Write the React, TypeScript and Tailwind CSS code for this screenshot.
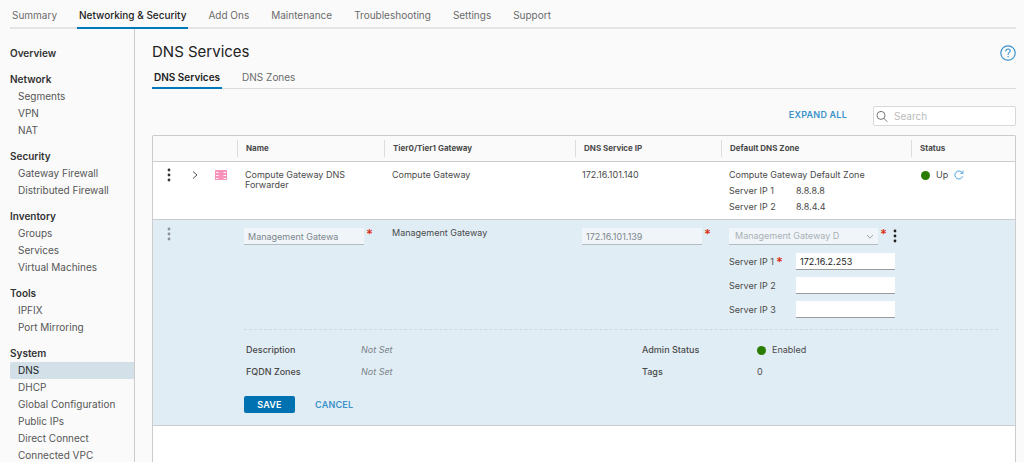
import { useState } from 'react';
import clsx from 'clsx';

const TABS = ['Summary', 'Networking & Security', 'Add Ons', 'Maintenance', 'Troubleshooting', 'Settings', 'Support'];

const SIDEBAR = [
  { title: 'Overview', items: [] },
  { title: 'Network', items: ['Segments', 'VPN', 'NAT'] },
  { title: 'Security', items: ['Gateway Firewall', 'Distributed Firewall'] },
  { title: 'Inventory', items: ['Groups', 'Services', 'Virtual Machines'] },
  { title: 'Tools', items: ['IPFIX', 'Port Mirroring'] },
  { title: 'System', items: ['DNS', 'DHCP', 'Global Configuration', 'Public IPs', 'Direct Connect', 'Connected VPC'] },
];

const COLUMNS = ['Name', 'Tier0/Tier1 Gateway', 'DNS Service IP', 'Default DNS Zone', 'Status'];

const disabledField = 'h-[17px] border-b border-[#b3bcc2] bg-[#f0f5f9] text-[9px] text-[#7d868c]';

function Dots({ className }: { className?: string }) {
  return (
    <svg viewBox="0 0 4 14" className={clsx('h-3.5 w-1', className)} fill="currentColor">
      <circle cx="2" cy="2" r="1.4" />
      <circle cx="2" cy="7" r="1.4" />
      <circle cx="2" cy="12" r="1.4" />
    </svg>
  );
}

function Required() {
  return <span className="text-[13px] leading-3 font-semibold text-[#d9331a]">*</span>;
}

function Dot() {
  return <span className="h-[9px] w-[9px] shrink-0 rounded-full bg-[#2b7d00]" />;
}

function ForwarderIcon() {
  return (
    <svg viewBox="0 0 12 10" className="h-2.5 w-3">
      <rect width="12" height="10" rx="0.6" fill="#f792bb" />
      <path d="M1 2.5h2.5M1 5.5h2.5M1 8.5h2.5M8.5 2.5H11M8.5 5.5H11M8.5 8.5H11" stroke="#fff" strokeWidth="0.9" />
    </svg>
  );
}

function ServerIp({ n, required, value }: { n: number; required?: boolean; value?: string }) {
  const id = `server-ip-${n}`;
  return (
    <div className="flex h-[17px] items-center">
      <label htmlFor={id} className="flex w-[67px] shrink-0 items-center gap-0.5">
        Server IP {n} {required && <Required />}
      </label>
      <input id={id} defaultValue={value}
        className="h-[17px] w-[99px] border-b border-[#9a9a9a] bg-white px-1 text-[9px] text-[#222] outline-none" />
    </div>
  );
}

export default function App() {
  const [tab, setTab] = useState('Networking & Security');
  const [page, setPage] = useState('DNS');
  const [view, setView] = useState('DNS Services');

  return (
    <div className="flex h-screen flex-col overflow-hidden bg-[#fafafa] pr-2 pl-2.5 font-['Inter',sans-serif] text-[9px] text-[#4a4a4a]">
      {/* Top tabs */}
      <nav className="flex h-[29px] shrink-0 gap-[18px] border-b-2 border-[#e4e4e4] text-[10px]">
        {TABS.map(t => (
          <button key={t} onClick={() => setTab(t)}
            className={clsx('-mb-0.5 h-[29px] border-b-2 px-0.5 pt-1 whitespace-nowrap',
              t === tab ? 'border-[#0079b8] font-medium text-[#222]' : 'border-transparent text-[#6b6b6b]')}>
            {t}
          </button>
        ))}
      </nav>

      <div className="flex min-h-0 flex-1">
        {/* Sidebar */}
        <aside className="flex w-[125px] shrink-0 flex-col gap-[9px] overflow-hidden border-r border-[#ccc] pt-4 text-[10px] leading-[17px]">
          {SIDEBAR.map(group => (
            <div key={group.title}>
              <h2 className="font-semibold text-[#333]">{group.title}</h2>
              {group.items.map(item => (
                <a key={item} href="#" onClick={() => setPage(item)}
                  className={clsx('block rounded-l-xs pl-2 whitespace-nowrap', item === page ? 'bg-[#d3e0e8] text-[#222]' : 'text-[#565656]')}>
                  {item}
                </a>
              ))}
            </div>
          ))}
        </aside>

        <main className="flex min-w-0 flex-1 flex-col pl-[17px]">
          <header className="mt-[11px] flex h-[25px] items-center justify-between">
            <h1 className="text-[15px] text-[#222]">DNS Services</h1>
            <button aria-label="Help" className="text-[#3a92c8]">
              <svg viewBox="0 0 16 16" className="h-4 w-4" fill="none" stroke="currentColor">
                <circle cx="8" cy="8" r="7.2" strokeWidth="1.2" />
                <path d="M5.9 6.1c0-1.3.9-2.1 2.2-2.1s2.1.8 2.1 1.9c0 1.6-2.1 1.5-2.1 3.5" strokeWidth="1.1" strokeLinecap="round" />
                <circle cx="8.1" cy="11.7" r=".7" fill="currentColor" stroke="none" />
              </svg>
            </button>
          </header>

          <div className="flex h-6 shrink-0 gap-[18px] border-b border-[#dcdcdc] text-[10px]">
            {['DNS Services', 'DNS Zones'].map(v => (
              <button key={v} onClick={() => setView(v)}
                className={clsx('-mb-px h-6 border-b-2 px-0.5 pt-0.5', v === view ? 'border-[#0079b8] font-semibold text-[#222]' : 'border-transparent text-[#6b6b6b]')}>
                {v}
              </button>
            ))}
          </div>

          <div className="mt-[17px] mb-[9px] flex h-5 shrink-0 items-center justify-end gap-[26px]">
            <button className="pb-0.5 text-[9px] font-semibold tracking-wide text-[#3a92c8]">EXPAND ALL</button>
            <label className="flex h-5 w-[143px] items-center gap-1.5 rounded-xs border border-[#d9d9d9] bg-white pl-0.5">
              <svg viewBox="0 0 12 12" className="h-3 w-3 shrink-0" fill="none" stroke="#777">
                <circle cx="5" cy="5.4" r="4" />
                <path d="m8 8.5 3 3" strokeLinecap="round" />
              </svg>
              <input aria-label="Search" placeholder="Search" className="min-w-0 flex-1 text-[10px] outline-none placeholder:text-[#bbb]" />
            </label>
          </div>

          {/* Services grid */}
          <div className="min-h-0 flex-1 rounded-t-xs border border-b-0 border-[#ccc] bg-white">
            <table className="w-full table-fixed border-separate border-spacing-0 text-left">
              <colgroup>
                <col className="w-8" />
                <col className="w-5" />
                <col className="w-8" />
                <col className="w-[147px]" />
                <col className="w-[191px]" />
                <col className="w-[146px]" />
                <col className="w-[190px]" />
                <col className="w-[104px]" />
              </colgroup>
              <thead>
                <tr className="h-[26px] bg-[#fafafa] text-[8px]">
                  <th colSpan={3} className="border-b border-[#ccc]" />
                  {COLUMNS.map(c => (
                    <th key={c} className="border-b border-[#ccc] p-0 font-bold">
                      <div className="h-[17px] border-l border-[#ddd] pl-2 leading-[17px]">{c}</div>
                    </th>
                  ))}
                </tr>
              </thead>
              <tbody>
                <tr className="h-[58px] align-top">
                  <td className="border-b border-[#ccc] pt-1.5">
                    <button aria-label="Row actions" className="mx-auto block"><Dots className="text-[#333]" /></button>
                  </td>
                  <td className="border-b border-[#ccc] pt-2">
                    <button aria-label="Expand row" className="mx-auto block">
                      <svg viewBox="0 0 6 10" className="h-2.5 w-1.5" fill="none" stroke="#555"><path d="m1 1.5 4 3.5-4 3.5" /></svg>
                    </button>
                  </td>
                  <td className="border-b border-[#ccc] pt-2"><div className="flex justify-center"><ForwarderIcon /></div></td>
                  <td className="border-b border-[#ccc] pt-2 pl-2 leading-[10px]">Compute Gateway DNS Forwarder</td>
                  <td className="border-b border-[#ccc] pt-2 pl-2 leading-[10px]">Compute Gateway</td>
                  <td className="border-b border-[#ccc] pt-2 pl-[7px] leading-[10px]">172.16.101.140</td>
                  <td className="border-b border-[#ccc] pt-[5px] pl-2 leading-4 whitespace-nowrap">
                    Compute Gateway Default Zone
                    <dl className="grid grid-cols-[67px_1fr]">
                      <dt>Server IP 1</dt><dd>8.8.8.8</dd>
                      <dt>Server IP 2</dt><dd>8.8.4.4</dd>
                    </dl>
                  </td>
                  <td className="border-b border-[#ccc] pt-[5px] pl-2.5 leading-4">
                    <div className="flex items-center gap-1.5">
                      <Dot /> Up
                      <button aria-label="Refresh status">
                        <svg viewBox="0 0 10 10" className="h-2.5 w-2.5" fill="none" stroke="#4ba3d6">
                          <path d="M8.7 6.3a4 4 0 1 1-.5-3.6M9 .7v2.6H6.4" />
                        </svg>
                      </button>
                    </div>
                  </td>
                </tr>

                {/* Row being edited */}
                <tr className="h-[109px] bg-[#e1edf5] align-top">
                  <td className="pt-[7px]">
                    <button aria-label="Row actions" disabled className="mx-auto block"><Dots className="text-[#8a9297]" /></button>
                  </td>
                  <td />
                  <td />
                  <td className="pt-2 pl-[7px]">
                    <div className="flex items-start gap-0.5">
                      <input aria-label="Name" disabled value="Management Gatewa" className={clsx(disabledField, 'w-[120px] px-1')} />
                      <Required />
                    </div>
                  </td>
                  <td className="pt-2 pl-2 leading-[10px]">Management Gateway</td>
                  <td className="pt-2 pl-[7px]">
                    <div className="flex items-start gap-0.5">
                      <input aria-label="DNS Service IP" disabled value="172.16.101.139" className={clsx(disabledField, 'w-[120px] px-1')} />
                      <Required />
                    </div>
                  </td>
                  <td className="pt-2 pl-2">
                    <div className="flex items-start gap-0.5">
                      <div className="relative">
                        <select aria-label="Default DNS Zone" disabled
                          className="block h-[17px] w-[149px] appearance-none border-b border-[#b3bcc2] bg-[#f0f5f9] px-1.5 text-[9px] text-[#a9b1b6] opacity-100">
                          <option>Management Gateway D</option>
                        </select>
                        <svg viewBox="0 0 8 6" className="pointer-events-none absolute top-1.5 right-1 h-1.5 w-2" fill="none" stroke="#9aa3a8">
                          <path d="m1 1 3 3.2L7 1" />
                        </svg>
                      </div>
                      <Required />
                      <button aria-label="Zone actions" className="ml-1 pt-px"><Dots className="text-[#222]" /></button>
                    </div>
                    <div className="mt-2 flex flex-col gap-[7px]">
                      <ServerIp n={1} required value="172.16.2.253" />
                      <ServerIp n={2} />
                      <ServerIp n={3} />
                    </div>
                  </td>
                  <td />
                </tr>
                <tr className="bg-[#e1edf5]">
                  <td colSpan={8} className="border-b border-[#ccc] pr-[17px] pb-3 pl-[91px]">
                    <dl className="grid grid-cols-[115px_281px_115px_1fr] border-t border-dashed border-[#cdd8df] pt-[9px] pl-0.5 leading-[22px]">
                      <dt className="font-medium">Description</dt><dd className="text-[#7a8388] italic">Not Set</dd>
                      <dt className="font-medium">Admin Status</dt><dd className="flex items-center gap-1.5"><Dot /> Enabled</dd>
                      <dt className="font-medium">FQDN Zones</dt><dd className="text-[#7a8388] italic">Not Set</dd>
                      <dt className="font-medium">Tags</dt><dd>0</dd>
                    </dl>
                    <div className="mt-[13px] flex items-center gap-5 text-[9px] font-semibold tracking-wide">
                      <button className="h-[17px] w-[51px] rounded-xs bg-[#0072b1] text-white">SAVE</button>
                      <button className="text-[#3a92c8]">CANCEL</button>
                    </div>
                  </td>
                </tr>
              </tbody>
            </table>
          </div>
        </main>
      </div>
    </div>
  );
}
